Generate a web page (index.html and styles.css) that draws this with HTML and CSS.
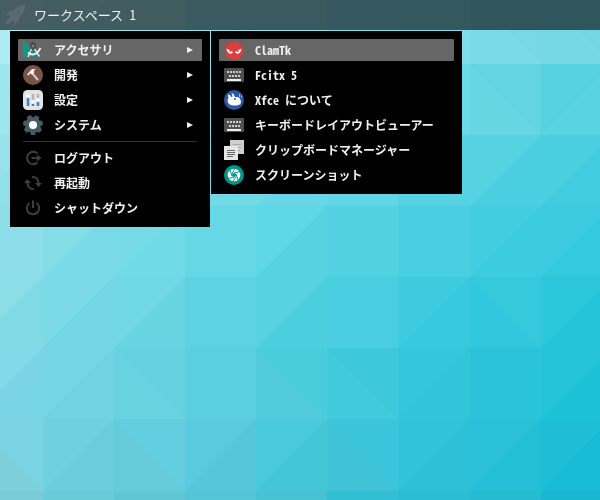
FILE: index.html
```html
<!DOCTYPE html>
<html lang="ja">
<head>
<meta charset="utf-8">
<title>デスクトップ</title>
<link rel="stylesheet" href="styles.css">
</head>
<body>
<svg class="wallpaper" id="wallpaper" viewBox="0 0 600 500" preserveAspectRatio="xMidYMid slice" aria-hidden="true"></svg>

<header class="panel">
  <button class="launcher" type="button">
    <svg class="rocket" viewBox="0 0 20 20" aria-hidden="true"><path d="M20 0C15.500 0 11.500 1.800 8.500 5.500L4.500 6 1 10.500l4.500.3L4.500 13 1.500 15.500.5 19.500l3.500-.8 3-3 2-.7.5 4.500 4.500-3.500.5-4.500C18.200 8.500 20 4.500 20 0Z" fill="#5c6974"/><circle cx="13.500" cy="6.500" r="1.200" fill="#4b5c65"/></svg>
    <span>ワークスペース 1</span>
  </button>
</header>

<main class="menus">
  <nav class="menu menu-root">
    <button class="item active" type="button">
      <svg class="icon" viewBox="0 0 20 20" aria-hidden="true"><path d="M0 0 18 16.500H0Z" fill="#0b9b88"/><path d="M4 10v3.500h4Z" fill="#626262"/><path d="M7 3.500 10 1.500l3 2V8l2 5h-3L10 9l-2 4.500H6L7.500 8Z" fill="#4c4c4c"/><path d="M8.500 9 5 17M11.500 9l5 7.500" stroke="#e6e6e6" stroke-width="1.500" fill="none"/><path d="M5 12.500c4 3.500 9 2.500 12.500-4.500" stroke="#eee" stroke-width="1.800" fill="none"/><circle cx="10" cy="6" r="1.200" fill="#888"/></svg>
      <span class="label">アクセサリ</span><span class="arrow"></span>
    </button>
    <button class="item" type="button">
      <svg class="icon" viewBox="0 0 20 20" aria-hidden="true"><circle cx="10" cy="10" r="10" fill="#795548"/><path d="m8.500 7.500 6.500 7.500" stroke="#d8c8c0" stroke-width="2"/><path d="m4 9.500 5-5.500 4 .3-2 1.200.2 2-2.200 2-1.800-1.200-1.700 2.200Z" fill="#f4f4f4"/></svg>
      <span class="label">開発</span><span class="arrow"></span>
    </button>
    <button class="item" type="button">
      <svg class="icon" viewBox="0 0 20 20" aria-hidden="true"><rect width="20" height="20" rx="4.500" fill="#e4e4e4"/><path d="M5 4v3M10 4v7M15 4v5" stroke="#b5b5b5" stroke-width="2.500"/><path d="M5 7v9M10 13v3M15 11v5" stroke="#3584e4" stroke-width="2.500"/><g fill="#fff"><circle cx="5" cy="6" r="2"/><circle cx="10" cy="12" r="2"/><circle cx="15" cy="10" r="2"/></g></svg>
      <span class="label">設定</span><span class="arrow"></span>
    </button>
    <button class="item" type="button">
      <svg class="icon" viewBox="0 0 20 20" aria-hidden="true"><g fill="#455a64" transform="rotate(26 10 10)"><circle cx="10" cy="10" r="7.800"/><path id="tooth" d="M7 3.500 8 0h4l1 3.500Z"/><use href="#tooth" transform="rotate(51 10 10)"/><use href="#tooth" transform="rotate(103 10 10)"/><use href="#tooth" transform="rotate(154 10 10)"/><use href="#tooth" transform="rotate(206 10 10)"/><use href="#tooth" transform="rotate(257 10 10)"/><use href="#tooth" transform="rotate(309 10 10)"/></g><circle cx="10" cy="10" r="4" fill="#fff"/></svg>
      <span class="label">システム</span><span class="arrow"></span>
    </button>
    <hr class="separator">
    <button class="item" type="button">
      <svg class="icon" viewBox="0 0 20 20" aria-hidden="true"><path d="M14.500 5.500A6.200 6.200 0 1 0 14.500 14.500" stroke="#3f3f3f" stroke-width="2" fill="none"/><path d="M8.500 9H14V6.500L18.500 10 14 13.500V11H8.500Z" fill="#3f3f3f"/></svg>
      <span class="label">ログアウト</span>
    </button>
    <button class="item" type="button">
      <svg class="icon" viewBox="0 0 20 20" aria-hidden="true"><g id="turn"><path d="M9 4c4-.5 6.500 2 6.500 6.500" stroke="#3f3f3f" stroke-width="2" fill="none"/><path d="M12 10h7L15.500 14Z" fill="#3f3f3f"/></g><use href="#turn" transform="rotate(180 10 10)"/></svg>
      <span class="label">再起動</span>
    </button>
    <button class="item" type="button">
      <svg class="icon" viewBox="0 0 20 20" aria-hidden="true"><path d="M6.500 5A6.200 6.200 0 1 0 13.500 5M10 2.500V10" stroke="#3f3f3f" stroke-width="2" fill="none"/></svg>
      <span class="label">シャットダウン</span>
    </button>
  </nav>

  <nav class="menu menu-sub">
    <button class="item active" type="button">
      <svg class="icon" viewBox="0 0 20 20" aria-hidden="true"><path d="M2 0C2 2 3 3.500 5.500 3.500L3.500 6C1.500 4.500 1 2 2 0ZM17.500 0C17.500 2 16.500 3.500 14 3.500L16 6c2-1.500 2.500-4 1.500-6Z" fill="#c83737"/><circle cx="10" cy="11" r="9" fill="#e13c3c"/><path d="M2.500 8.500 9 12C7.500 15 3 14 2.500 8.500ZM17.500 8.500 11 12C12.500 15 17 14 17.500 8.500Z" fill="#fff"/><path d="M5.500 10.500h1.200v1.500H5.500ZM13.300 10.500h1.200v1.500h-1.200Z" fill="#a22"/></svg>
      <span class="label">ClamTk</span>
    </button>
    <button class="item" type="button">
      <svg class="icon" viewBox="0 0 20 20" aria-hidden="true"><g id="keyboard"><rect y="3" width="20" height="14" rx="1" fill="#505050"/><path d="M3 7h14" stroke="#ccc" stroke-width="2" stroke-dasharray="2 1"/><path d="M5 11h11" stroke="#ccc" stroke-width="2" stroke-dasharray="2 1"/><path d="M3 15h14" stroke="#eee" stroke-width="2"/></g></svg>
      <span class="label">Fcitx 5</span>
    </button>
    <button class="item" type="button">
      <svg class="icon" viewBox="0 0 20 20" aria-hidden="true"><circle cx="10" cy="10" r="10" fill="#285ba5"/><path d="M4.500 8 3.800 4.500 6 5l1 2 1.500-.3L7.500 3 9.500 4l1.500 3h2.500l2 1L17 11l-.5 3C13 16 8 16 5 14 3 12 3.500 9.500 4.500 8Z" fill="#fff"/><path d="M15.500 4v3M17.500 5.500v2" stroke="#a5bedf" stroke-width="1"/><circle cx="11" cy="9" r="1" fill="#285ba5"/></svg>
      <span class="label">Xfce について</span>
    </button>
    <button class="item" type="button">
      <svg class="icon" viewBox="0 0 20 20" aria-hidden="true"><use href="#keyboard"/></svg>
      <span class="label">キーボードレイアウトビューアー</span>
    </button>
    <button class="item" type="button">
      <svg class="icon" viewBox="0 0 20 20" aria-hidden="true"><path d="M6 0h14v14H6Z" fill="#cecece"/><path d="M9 4.500h8M9 7.500h8M13 10.500h3" stroke="#aaa"/><path d="M0 6h14v14H0Z" fill="#e6e6e6"/><path d="M3 10.500h8M3 12.500h8M3 14.500h8M3 16.500h6" stroke="#666"/></svg>
      <span class="label">クリップボードマネージャー</span>
    </button>
    <button class="item" type="button">
      <svg class="icon" viewBox="0 0 20 20" aria-hidden="true"><circle cx="10" cy="10" r="10" fill="#009688"/><circle cx="10" cy="10" r="6.300" fill="#fff"/><path d="m10 8 6-1.500M12 9l2 6M12 11.500l-3 5M10 12l-6 1.500M8 11l-2-6M8 8.500 11 3.500" stroke="#009688" stroke-width="1"/><circle cx="10" cy="10" r="2" fill="#009688"/></svg>
      <span class="label">スクリーンショット</span>
    </button>
  </nav>
</main>
<script src="wallpaper.js"></script>
</body>
</html>
```
FILE: styles.css
```css
* {
  box-sizing: border-box;
}

body {
  margin: 0;
  min-height: 100vh;
  overflow: hidden;
  background: #5fd3e2;
  color: #f0f0f0;
  font-family: "Noto Sans CJK JP", sans-serif;
  font-feature-settings: "hwid";
}

button {
  margin: 0;
  border: 0;
  background: none;
  color: inherit;
  font: inherit;
  font-feature-settings: inherit;
  text-align: left;
}

.wallpaper {
  position: fixed;
  inset: 0;
  z-index: -1;
  width: 100%;
  height: 100%;
}

.panel {
  display: flex;
  height: 30px;
  background: rgba(0, 0, 0, 0.6);
}

.launcher {
  display: flex;
  align-items: center;
  gap: 9px;
  padding: 0 5px;
  font-size: 13px;
  line-height: 30px;
}

.rocket {
  width: 20px;
  height: 20px;
}

.menus {
  display: flex;
  align-items: flex-start;
  gap: 1px;
  padding: 1px 10px;
}

.menu {
  display: flex;
  flex-direction: column;
  gap: 3px;
  padding: 8px;
  background: #000;
}

.menu-root {
  flex: 0 1 200px;
}

.menu-sub {
  flex: 0 1 251px;
}

.item {
  display: flex;
  align-items: center;
  gap: 11px;
  height: 22px;
  padding: 0 9px 0 5px;
  border-radius: 1px;
  font-size: 12px;
  font-weight: 700;
  line-height: 22px;
  white-space: nowrap;
}

.item.active {
  background: #666;
}

.icon {
  flex: none;
  width: 20px;
  height: 20px;
}

.label {
  flex: 1;
}

.arrow {
  border: solid transparent;
  border-width: 3px 0 3px 6px;
  border-left-color: #f0f0f0;
}

.separator {
  align-self: stretch;
  height: 1px;
  margin: 2px 5px;
  border: 0;
  background: #333;
}
```
FILE: wallpaper.js
```js
// Each tile is one colour, or two split by a diagonal:
// "/" joins upper-left and lower-right, "\" joins upper-right and lower-left.
const columns = [-28, 43, 114, 185, 256, 327, 398, 470, 541, 612];
const rows = [-7, 64, 135, 206, 277, 348, 419, 491, 562];
const tiles = [
  "aeebf3 a8e8f0/a2e6ef a0e5ee 92e3ed 8ee2ec 84deea 80dce9 78d8e5\\7cdae7 73d6e3\\77d8e5",
  "9de6ed 96e2eb 8ee0ea 82dfea 7cdce8 74dae7 6ad8e6 62d4e2\\66d6e3 56d1e0/5ad3e1",
  "97e2ea/91dfe8 8adfe8 82dde8 76dbe8/70dae7 70dae7/68d7e6 62d6e5 56d2e2 54d2e1/4acfe0 4acfe0/42cce0",
  "8ddde8 82dde6/7bdae7 76dbe7/70dae7 66d7e4 5fd6e3/55d1e0 52d2e0 48cfe1 42cde0/3dcbdf 3bcade/34c9dc",
  "8adee6/80dae5 7bdae6/73d6e5 70d7e4/69d4e1 5dd2e3 56d2e0/4dcde0 48cde1 3fcbdf/37c9dd 36c9dc\\31c7dc 2dc7db/24c4da",
  "82d9e8/79d5e5 74d6e4/70d2e2 66d2e1\\68d2e1 5acfe0 4bccdd\\4fcbdc 3dc8dc\\41c9dc 36c6db/32c5da 2bc3da 24c3d9/1dc1d7",
  "79d3e2\\7ccfdb 6fd0df/69cddc 62cee0\\65cbd9 58ccde/54c8da 4ac9dc/45c5d8 3ac5da\\40c3d7 31c3d9/2dc0d6 29c1d8/23bfd6 1dbed6/17bbd4",
  "78ccd8 6acbd8 60c6d6 54c5d6 47c2d4 30bfd3 2cbdd2 27bbd1 1ab8d0"
];

const svg = document.getElementById("wallpaper");

function draw(points, colour) {
  const shape = document.createElementNS("http://www.w3.org/2000/svg", "polygon");
  shape.setAttribute("points", points.join(" "));
  shape.setAttribute("fill", "#" + colour);
  svg.append(shape);
}

tiles.forEach((line, r) => {
  line.split(" ").forEach((tile, c) => {
    const [left, right, top, bottom] = [columns[c], columns[c + 1], rows[r], rows[r + 1]];
    const [upper, lower] = tile.split(/[\/\\]/);
    draw([left, top, right, top, right, bottom, left, bottom], upper);
    if (lower) {
      const corner = tile.includes("/") ? [right, top] : [left, top];
      draw([...corner, right, bottom, left, bottom], lower);
    }
  });
});
```
